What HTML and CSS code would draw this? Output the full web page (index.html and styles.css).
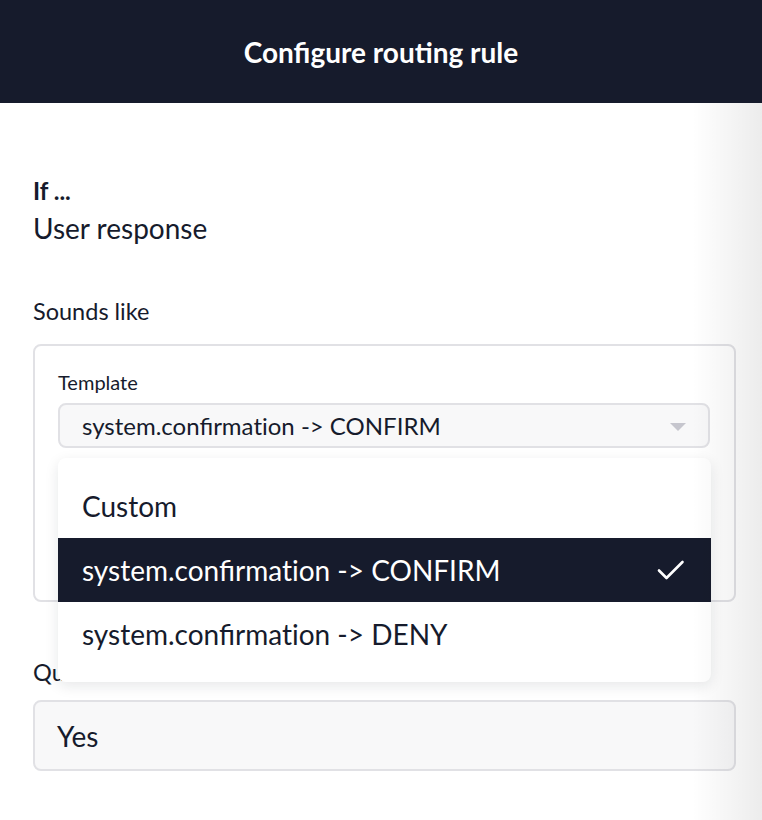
FILE: index.html
```html
<!DOCTYPE html>
<html>
<head>
<meta charset="utf-8">
<link rel="stylesheet" href="styles.css">
</head>
<body>
<header class="header"><h1 class="title">Configure routing rule</h1></header>
<main class="content">
  <div class="cond">
    <div class="cond-label">If ...</div>
    <div class="cond-value">User response</div>
  </div>
  <div class="field-label">Sounds like</div>
  <div class="box">
    <div class="small-label">Template</div>
    <div class="select-wrap">
      <div class="select">
        <span>system.confirmat&zwnj;ion -&gt; CONFIRM</span>
        <span class="caret"></span>
      </div>
      <ul class="menu">
        <li class="item">Custom</li>
        <li class="item selected">system.confirmat&zwnj;ion -&gt; CONFIRM
          <svg class="check" width="28" height="22" viewBox="0 0 28 22"><path d="M2 11.5 L9.5 19 L25.5 3" fill="none" stroke="#fff" stroke-width="2.6" stroke-linecap="round" stroke-linejoin="round"/></svg>
        </li>
        <li class="item">system.confirmat&zwnj;ion -&gt; DENY</li>
      </ul>
    </div>
  </div>
  <div class="field-label second">Question</div>
  <div class="input">Yes</div>
</main>
<div class="edge-shade"></div>
</body>
</html>
```
FILE: styles.css
```css
* { box-sizing: border-box; }
html, body { margin: 0; padding: 0; }
body {
  font-family: Lato, "Open Sans", sans-serif;
  color: #161b2c;
  background: #fff;
  width: 762px;
  height: 820px;
  overflow: hidden;
}
.header {
  height: 103px;
  background: #161b2c;
  display: flex;
  align-items: center;
  justify-content: center;
}
.title {
  margin: 0;
  color: #fff;
  font-size: 28px;
  font-weight: 700;
}
.content {
  padding: 73px 26px 0 33px;
}
.cond-label {
  font-size: 24px;
  font-weight: 700;
  line-height: 30px;
}
.cond-value {
  font-size: 28px;
  line-height: 38px;
  margin-top: 3px;
}
.field-label {
  font-size: 23.5px;
  line-height: 30px;
  margin-top: 49px;
}
.field-label.second { margin-top: 55px; }
.box {
  margin-top: 18px;
  border: 2px solid #e1e1e5;
  border-radius: 8px;
  padding: 24px 24px 0 23px;
  height: 258px;
}
.small-label {
  font-size: 20px;
  line-height: 24px;
}
.select-wrap {
  position: relative;
  margin-top: 9px;
}
.select {
  height: 45px;
  background: #f8f8f9;
  border: 2px solid #e1e1e5;
  border-radius: 8px;
  display: flex;
  align-items: center;
  justify-content: space-between;
  padding: 0 22px 0 22px;
  font-size: 24px;
}
.caret {
  width: 0; height: 0;
  border-left: 8px solid transparent;
  border-right: 8px solid transparent;
  border-top: 8px solid #c6c6ce;
  margin-top: 2px;
}
.menu {
  position: absolute;
  left: 0;
  right: -1px;
  top: 55px;
  margin: 0;
  padding: 16px 0;
  list-style: none;
  background: #fff;
  border-radius: 8px;
  box-shadow: 0 4px 14px rgba(22, 27, 44, 0.10);
  z-index: 2;
}
.item {
  height: 64px;
  display: flex;
  align-items: center;
  justify-content: space-between;
  padding: 0 24px;
  font-size: 28px;
}
.item.selected {
  background: #161b2c;
  color: #fff;
}
.check { display: block; margin-right: 2px; }
.input {
  margin-top: 13px;
  height: 71px;
  background: #f8f8f9;
  border: 2px solid #e1e1e5;
  border-radius: 8px;
  display: flex;
  align-items: center;
  padding-left: 22px;
  font-size: 28px;
}
.edge-shade {
  position: absolute;
  top: 103px;
  right: 0;
  width: 70px;
  height: 717px;
  background: linear-gradient(to right, rgba(0,0,0,0), rgba(0,0,0,0.075));
  pointer-events: none;
  z-index: 5;
}
```
